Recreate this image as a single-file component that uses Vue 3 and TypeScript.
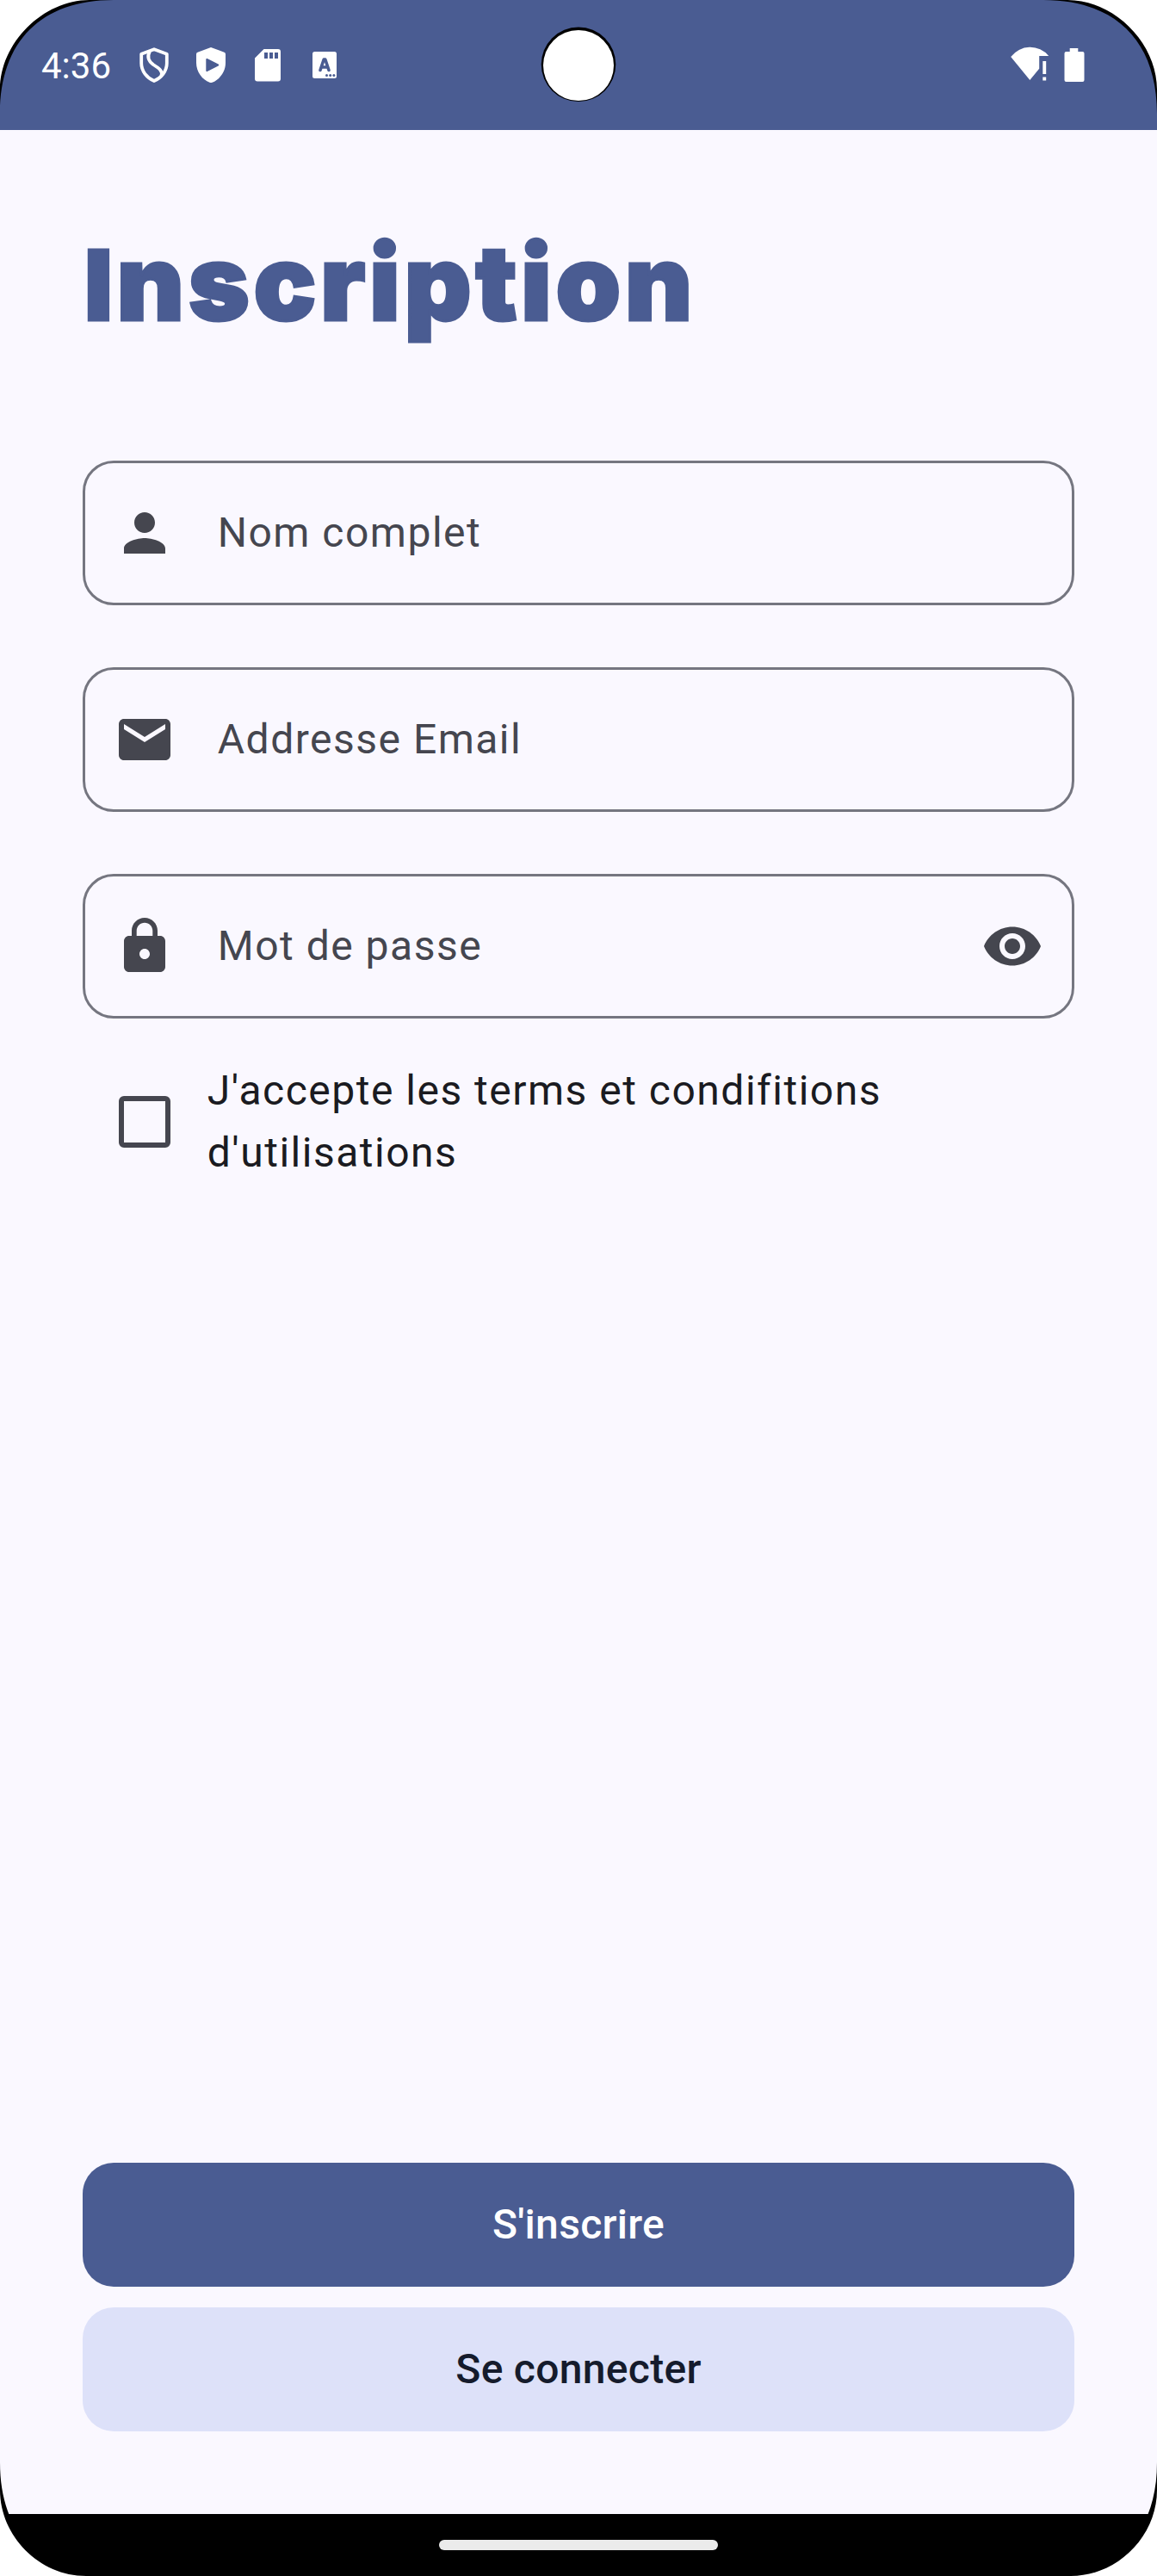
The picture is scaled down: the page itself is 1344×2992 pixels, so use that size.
<script setup lang="ts">
import { ref } from 'vue'

interface Field {
  id: string
  label: string
  icon: string
  toggle?: boolean
}

const fields: Field[] = [
  {
    id: 'name',
    label: 'Nom complet',
    icon: 'M12 12c2.21 0 4-1.79 4-4s-1.79-4-4-4-4 1.79-4 4 1.79 4 4 4zm0 2c-2.67 0-8 1.34-8 4v2h16v-2c0-2.66-5.33-4-8-4z',
  },
  {
    id: 'email',
    label: 'Addresse Email',
    icon: 'M20 4H4c-1.1 0-1.99.9-1.99 2L2 18c0 1.1.9 2 2 2h16c1.1 0 2-.9 2-2V6c0-1.1-.9-2-2-2zm0 4l-8 5-8-5V6l8 5 8-5v2z',
  },
  {
    id: 'password',
    label: 'Mot de passe',
    icon: 'M18 8h-1V6c0-2.76-2.24-5-5-5S7 3.24 7 6v2H6c-1.1 0-2 .9-2 2v10c0 1.1.9 2 2 2h12c1.1 0 2-.9 2-2V10c0-1.1-.9-2-2-2zm-6 9c-1.1 0-2-.9-2-2s.9-2 2-2 2 .9 2 2-.9 2-2 2zm3.1-9H8.9V6c0-1.71 1.39-3.1 3.1-3.1 1.71 0 3.1 1.39 3.1 3.1v2z',
    toggle: true,
  },
]

const topMask = 'M0 0V104C0 50 50 0 104 0Z'
const bottomMask = 'M0 0V100C0 46 46 0 100 0Z'
const corners = [
  { id: 'tl', mask: topMask },
  { id: 'tr', mask: topMask },
  { id: 'bl', mask: bottomMask },
  { id: 'br', mask: bottomMask },
]
const accepted = ref(false)
</script>

<template>
  <div class="screen">
    <header class="status">
      <span class="clock">4:36</span>
      <div class="status-left">
        <svg width="54" height="54" viewBox="0 0 54 54" fill="none" stroke="#fff" stroke-width="3.8" stroke-linejoin="round">
          <path d="M27 9.2 12.2 14.8V25.500C12.200 34.500 18.600 42.500 27 46C35.400 42.500 41.800 34.500 41.800 25.500V14.800Z" />
          <path d="M22 11.500C18.500 18 20.500 23 26 27C33 31.500 37 34.500 35.500 39.500" />
        </svg>
        <svg width="54" height="54" viewBox="0 0 54 54" fill="#fff">
          <path fill-rule="evenodd" d="M27 7 11.500 12.800Q10 13.400 10 15V25C10 35.500 17 44.500 25.500 47.800Q27 48.400 28.500 47.800C37 44.500 44 35.500 44 25V15Q44 13.400 42.500 12.800ZM22.800 20 35.600 26.600Q37 27.500 35.600 28.400L22.800 35Q21.300 35.500 21.300 34V21Q21.300 19.500 22.800 20Z" />
        </svg>
        <svg width="54" height="54" viewBox="0 0 54 54" fill="#fff">
          <path fill-rule="evenodd" d="M22.500 9H39Q42 9 42 12V43.500Q42 46.500 39 46.500H15Q12 46.500 12 43.500V19.500ZM23 13V20H27V13ZM29 13V20H33V13ZM35 13V20H39V13Z" />
        </svg>
        <svg width="54" height="54" viewBox="0 0 54 54">
          <rect x="13" y="12" width="28" height="31" rx="2.500" fill="#fff" />
          <path d="M22 33.500 26.200 21H27.800L32 33.500M23.500 30H30.500" fill="none" stroke="#4a5c92" stroke-width="3.600" stroke-linecap="round" stroke-linejoin="round" />
          <g fill="#4a5c92">
            <circle cx="29.500" cy="39.500" r="1.500" />
            <circle cx="33.700" cy="39.500" r="1.500" />
            <circle cx="37.900" cy="39.500" r="1.500" />
          </g>
        </svg>
      </div>
      <div class="status-right">
        <svg width="48" height="54" viewBox="0 0 48 54" fill="#fff">
          <path d="M24.300 45 2.200 18A28 28 0 0 1 46.200 17H35.200V31.700L24.300 45Z" />
          <path d="M39.300 23H43.200V38H39.300ZM39.300 41.500H43.200V45.500H39.300Z" />
        </svg>
        <svg width="24" height="54" viewBox="0 0 24 54" fill="#fff">
          <path d="M6.700 8H16.300V12H21.500Q23.500 12 23.500 14V45Q23.500 47 21.500 47H2.500Q0.500 47 0.500 45V14Q0.500 12 2.500 12H6.700Z" />
        </svg>
      </div>
      <svg class="camera" width="90" height="90" viewBox="0 0 90 90">
        <circle cx="45" cy="44.800" r="43.300" fill="#000" />
        <circle cx="45" cy="46" r="41" fill="#fff" />
      </svg>
    </header>

    <main class="content">
      <h1>Inscription</h1>
      <form class="form" @submit.prevent>
        <div v-for="field in fields" :key="field.id" class="field">
          <svg class="icon" viewBox="0 0 24 24"><path :d="field.icon" /></svg>
          <span class="label">{{ field.label }}</span>
          <svg v-if="field.toggle" class="icon" viewBox="0 0 24 24">
            <path d="M12 4.500C7 4.500 2.730 7.610 1 12c1.730 4.390 6 7.500 11 7.500s9.270-3.110 11-7.500c-1.730-4.390-6-7.500-11-7.500zM12 17c-2.760 0-5-2.240-5-5s2.240-5 5-5 5 2.240 5 5-2.240 5-5 5zm0-8c-1.660 0-3 1.340-3 3s1.340 3 3 3 3-1.340 3-3-1.340-3-3-3z" />
          </svg>
        </div>
      </form>
      <div class="terms" @click="accepted = !accepted">
        <span class="box" :class="{ checked: accepted }"></span>
        <p>J'accepte les terms et condifitions d'utilisations</p>
      </div>
      <div class="actions">
        <button class="primary" type="button">S'inscrire</button>
        <button class="secondary" type="button">Se connecter</button>
      </div>
    </main>

    <footer class="nav"><span class="handle"></span></footer>

    <svg v-for="c in corners" :key="c.id" class="corner" :class="c.id" width="132" height="132" viewBox="0 0 132 132">
      <path d="M0 0V132C0 48 48 0 132 0Z" fill="#000" />
      <path :d="c.mask" fill="#fff" />
    </svg>
  </div>
</template>

<style>
body {
  margin: 0;
  background: #fff;
}
</style>

<style scoped>
.screen {
  position: relative;
  display: flex;
  flex-direction: column;
  width: 1344px;
  height: 2992px;
  overflow: hidden;
  background: #faf8ff;
  font-family: Roboto, sans-serif;
}
.status {
  position: relative;
  display: flex;
  flex: none;
  box-sizing: border-box;
  height: 151px;
  padding: 48px 84px 0 48px;
  background: #4a5c92;
  color: #fff;
}
.clock {
  width: 104px;
  font-size: 42px;
  line-height: 58px;
}
.status-left {
  display: flex;
  gap: 12px;
}
.status-right {
  display: flex;
  gap: 16px;
  margin-left: auto;
}
.camera {
  position: absolute;
  left: 627px;
  top: 30px;
}
.content {
  display: flex;
  flex: 1;
  flex-direction: column;
  padding: 96px 96px;
}
h1 {
  height: 168px;
  margin: 0 0 120px;
  padding-left: 2px;
  color: #4a5c92;
  font-family: Inter, sans-serif;
  font-size: 121px;
  font-weight: 900;
  line-height: 162px;
  letter-spacing: 4.6px;
  white-space: nowrap;
  -webkit-text-stroke: 3px #4a5c92;
}
h1::first-letter {
  font-size: 113px;
}
.form {
  display: flex;
  flex-direction: column;
  gap: 72px;
}
.field {
  display: flex;
  box-sizing: border-box;
  height: 168px;
  padding: 0 33px;
  align-items: center;
  border: 3px solid #757680;
  border-radius: 36px;
}
.icon {
  flex: none;
  width: 72px;
  height: 72px;
  fill: #45464f;
}
.label {
  flex: 1;
  padding-left: 48.75px;
  color: #45464f;
  font-size: 48px;
  line-height: 72px;
  letter-spacing: 1.5px;
}
.terms {
  display: flex;
  align-items: center;
  margin-top: 48px;
  padding-left: 42px;
}
.terms p {
  width: 860px;
  margin: 0 0 0 42.75px;
  color: #1a1b21;
  font-size: 48px;
  line-height: 72px;
  letter-spacing: 1.5px;
}
.box {
  flex: none;
  box-sizing: border-box;
  width: 60px;
  height: 60px;
  border: 6px solid #45464f;
  border-radius: 6px;
}
.box.checked {
  background: #4a5c92;
}
.actions {
  display: flex;
  flex-direction: column;
  gap: 24px;
  margin-top: auto;
}
.actions button {
  height: 144px;
  padding: 0;
  border: 0;
  border-radius: 36px;
  font: 500 48px/72px Roboto, sans-serif;
  letter-spacing: 0.3px;
}
.primary {
  background: #4a5c92;
  color: #fff;
}
.secondary {
  background: #dde1f9;
  color: #151b2c;
}
.nav {
  display: flex;
  flex: none;
  box-sizing: border-box;
  height: 72px;
  padding-top: 30px;
  justify-content: center;
  background: #000;
}
.handle {
  width: 324px;
  height: 12px;
  border-radius: 6px;
  background: #ebebeb;
}
.corner {
  position: absolute;
}
.tl {
  top: 0;
  left: 0;
}
.tr {
  top: 0;
  right: 0;
  transform: scaleX(-1);
}
.bl {
  bottom: 0;
  left: 0;
  transform: scaleY(-1);
}
.br {
  right: 0;
  bottom: 0;
  transform: scale(-1);
}
</style>
